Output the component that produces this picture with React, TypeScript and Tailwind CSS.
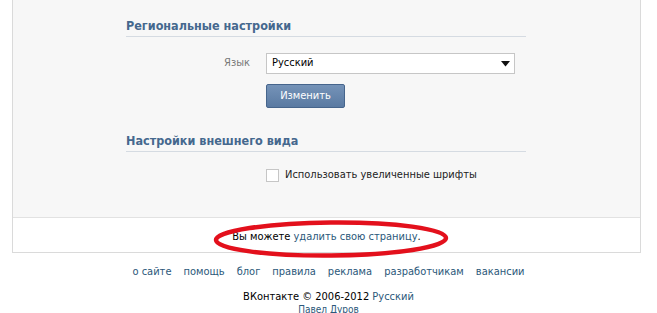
import React from "react";

const font = { fontFamily: "'DejaVu Sans Condensed', Tahoma, sans-serif" };

export default function App() {
  const links = ["о сайте", "помощь", "блог", "правила", "реклама", "разработчикам", "вакансии"];
  return (
    <div className="relative w-[657px] h-[313px] overflow-hidden bg-white text-[11px]" style={font}>
      <div className="ml-[12px] w-[629px] border-x border-b border-[#dadada]">
        <div className="h-[218px] bg-[#f7f7f7] border-b border-[#e2e2e2] pt-[18px] pl-[113px]">
          <div className="w-[400px]">
            <div className="text-[12.5px] leading-[15px] font-bold text-[#45688e] pb-[3px] border-b border-[#d5dbe2]">
              Региональные настройки
            </div>
            <div className="mt-[16px] flex items-center">
              <div className="w-[124px] text-right text-[#777]">Язык</div>
              <div className="ml-[16px] w-[249px] h-[21px] bg-white border border-[#c6c6c6] flex items-center justify-between pl-[5px] pr-[4px] text-black">
                <span>Русский</span>
                <svg width="9" height="6" viewBox="0 0 9 6"><path d="M0 0h9L4.5 5.5z" fill="#111" /></svg>
              </div>
            </div>
            <div className="mt-[10px] ml-[140px] w-[79px] h-[24px] rounded-[2px] border border-[#46658c] bg-gradient-to-b from-[#7593b8] to-[#5a7aa2] flex items-center justify-center text-white text-[11px]">
              Изменить
            </div>
            <div className="mt-[25px] text-[12.5px] leading-[15px] font-bold text-[#45688e] pb-[3px] border-b border-[#d5dbe2]">
              Настройки внешнего вида
            </div>
            <div className="mt-[15px] ml-[140px] flex items-center">
              <div className="w-[13px] h-[13px] bg-white border border-[#c6c6c6]" />
              <span className="ml-[6px] text-[#222]">Использовать увеличенные шрифты</span>
            </div>
          </div>
        </div>
        <div className="h-[34px] bg-white flex items-center justify-center pt-[4px] text-black">
          <span>
            Вы можете <span className="text-[#2b587a]">удалить свою страницу</span>.
          </span>
        </div>
      </div>
      <div className="mt-[12px] flex justify-center gap-[12px] text-[#2b587a] leading-[14px]">
        {links.map((l) => (
          <span key={l}>{l}</span>
        ))}
      </div>
      <div className="mt-[11px] text-center leading-[14px] text-black">
        ВКонтакте © 2006-2012 <span className="text-[#2b587a]">Русский</span>
      </div>
      <div className="text-center text-[10px] leading-[12px] text-[#2b587a]">Павел Дуров</div>
      <svg className="absolute left-0 top-0" width="657" height="313" viewBox="0 0 657 313">
        <ellipse cx="331" cy="239" rx="115" ry="16.5" fill="none" stroke="#e3101c" strokeWidth="4.5" transform="rotate(-0.5 331 239)" />
      </svg>
    </div>
  );
}
